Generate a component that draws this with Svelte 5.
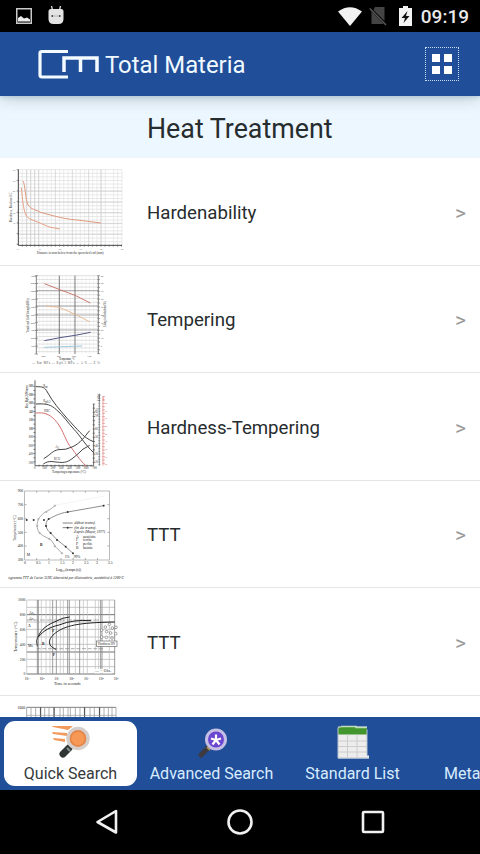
<script lang="ts">
	type Item = { label: string; chart: string };

	const items: Item[] = [
		{ label: 'Hardenability', chart: 'hardenability' },
		{ label: 'Tempering', chart: 'tempering' },
		{ label: 'Hardness-Tempering', chart: 'hardness' },
		{ label: 'TTT', chart: 'ttt-log' },
		{ label: 'TTT', chart: 'ttt-grid' },
		{ label: '', chart: 'partial' }
	];

	const tabs = [
		{ label: 'Quick Search', icon: 'quick' },
		{ label: 'Advanced Search', icon: 'advanced' },
		{ label: 'Standard List', icon: 'list' },
		{ label: 'Meta', icon: '' }
	];

	let active = $state(0);

	const range = (from: number, to: number, step: number) =>
		Array.from({ length: Math.floor((to - from) / step) + 1 }, (_, i) => from + i * step);

	const vLines = (xs: number[], top: number, bottom: number) =>
		xs.map((x) => `M${x} ${top}V${bottom}`).join('');
	const hLines = (ys: number[], left: number, right: number) =>
		ys.map((y) => `M${left} ${y}H${right}`).join('');
</script>

{#snippet hardenability()}
	<path d={hLines(range(30, 252, 10.8), 56, 366)} stroke="#ddd" stroke-width="2" />
	<path d={vLines([67, 80, 92, 104, 116, 129, 141, 154, 179, 191, 204, 228, 241, 254, 278, 291, 303, 316, 341, 353, 366], 30, 256)} stroke="#e2e2e2" stroke-width="2" />
	<path d={vLines([80, 92, 104, 116, 166, 217, 266, 303], 30, 256) + hLines([94, 127, 159, 191, 223], 56, 366)} stroke="#cacaca" stroke-width="2" />
	<path d="M55 30V257H366" stroke="#444" stroke-width="3" />
	<path d={vLines(range(67, 366, 12.4), 255, 261) + hLines(range(30, 256, 32), 50, 56)} stroke="#555" stroke-width="2" />
	<path d="M69 64C76 75 75 116 84 136C92 149 109 151 122 158C166 171 200 179 240 182L303 190" stroke="#e09a7c" stroke-width="3" />
	<path d="M64 84C68 116 68 145 79 169C88 181 109 184 122 191Q146 205 180 208" stroke="#e8a184" stroke-width="3" />
	<g font-size="8" fill="#777">
		{#each [60, 50, 40, 30, 20, 10] as n, i}
			<text x="38" y={34 + i * 32}>{n}</text>
		{/each}
		{#each [0, 10, 20, 30, 40, 50] as n, i}
			<text x={52 + i * 62} y="271">{n}</text>
		{/each}
	</g>
	<text x="110" y="283" font-size="10" textLength="201" fill="#333">Distance in mm below from the quenched end (mm)</text>
	<text transform="translate(37 188) rotate(-90)" font-size="10" textLength="90" fill="#444">Hardness, Rockwell C</text>
{/snippet}

{#snippet tempering()}
	<path d={vLines(range(118, 294, 11.6), 27, 260)} stroke="#f0f0f0" stroke-width="2" />
	<path d={hLines(range(27, 262, 11.4), 109, 295)} stroke="#d2d2d2" stroke-width="2" />
	<path d={hLines([72, 118, 145, 190], 109, 295)} stroke="#888" stroke-width="2" />
	<path d={vLines([109, 178, 225, 295], 27, 262)} stroke="#666" stroke-width="2.5" />
	<path d={hLines(range(27, 262, 23.5), 104, 114) + hLines(range(27, 262, 11.7), 292, 300)} stroke="#777" stroke-width="2" />
	<path d="M133 51L177 68L225 86L271 109" stroke="#cb7c70" stroke-width="3" />
	<path d="M136 118L178 122L226 143L270 166" stroke="#e9bd98" stroke-width="3" />
	<path d="M133 222L180 213L225 206L272 197" stroke="#555887" stroke-width="3" />
	<path d="M133 242L246 238" stroke="#9fc9df" stroke-width="3" />
	<g font-size="8" fill="#555">
		{#each range(0, 9, 1) as i}
			<text x="92" y={30 + i * 23.5}>{1000 - i * 100}</text>
			<text x="302" y={30 + i * 23.5}>{90 - i * 10}</text>
		{/each}
		{#each [400, 500, 600, 700] as n, i}
			<text x={124 + i * 46} y="271">{n}</text>
		{/each}
	</g>
	<text x="177" y="279" font-size="9" textLength="48" fill="#333">Temperature, °C</text>
	<text x="96" y="293" font-size="9" textLength="203" fill="#555">— Rm MPa  — Rp0.2 MPa  — A %  — Z %</text>
	<text transform="translate(88 198) rotate(-90)" font-size="9" textLength="103" fill="#444">Tensile and Yield Strength (MPa)</text>
	<text transform="translate(318 181) rotate(-90)" font-size="9" textLength="77" fill="#444">Elong. in Reduction (%)</text>
{/snippet}

{#snippet hardness()}
	<path d="M105 17V273H281V88" stroke="#444" stroke-width="2.5" />
	<path d={hLines(range(35, 270, 12.6), 100, 106) + vLines(range(117, 280, 12), 270, 276) + hLines(range(88, 272, 12.5), 278, 285)} stroke="#555" stroke-width="2" />
	<path d="M298 57V273" stroke="#555" stroke-width="2" />
	<path d={hLines(range(62, 272, 8), 295, 301)} stroke="#777" stroke-width="2" />
	<path d="M309 66V273" stroke="#df7d7d" stroke-width="2" />
	<path d={hLines(range(66, 272, 10), 306, 315)} stroke="#e38b8b" stroke-width="2" />
	<path d="M108 36C128 36 134 37 142 52C158 82 178 104 202 132C220 151 246 182 260 190Q271 198 281 201" stroke="#444" stroke-width="3" />
	<path d="M108 88C143 86 153 91 169 105C192 124 202 143 222 164C239 181 253 208 281 234" stroke="#444" stroke-width="3" />
	<path d="M107 115C132 113 146 117 163 134C188 160 192 187 208 212C223 228 236 255 259 274" stroke="#d56f6f" stroke-width="3" />
	<path d="M131 252C152 240 158 227 176 225Q199 226 216 217C242 206 253 186 269 168" stroke="#444" stroke-width="3" />
	<path d="M130 268C147 256 159 262 179 263C201 265 209 258 229 242Q249 220 269 212" stroke="#444" stroke-width="3" />
	<g font-size="9" fill="#333">
		{#each ['2000', '1800', '1600', '1400', '1200', '1000', '800', '600', '400', '200'] as n, i}
			<text x="86" y={38 + i * 25.5} textLength="14">{n}</text>
		{/each}
		{#each [0, 100, 200, 300, 400, 500, 600, 700] as n, i}
			<text x={102 + i * 25} y="284">{n}</text>
		{/each}
		<text x="130" y="37">R<tspan dy="2">m</tspan></text>
		<text x="130" y="83">R<tspan dy="2">p0.2</tspan></text>
		<text x="132" y="111">HRC</text>
		<text x="166" y="221">A<tspan dy="2">5</tspan></text>
		<text x="162" y="257">KCU</text>
		{#each range(0, 4, 1) as i}
			<text x="285" y={166 + i * 25}>{60 - i * 10}</text>
		{/each}
	</g>
	<g font-size="8" fill="#db7373">
		{#each range(0, 8, 1) as i}
			<text x="314" y={88 + i * 23}>{60 - i * 5}</text>
		{/each}
	</g>
	<text x="156" y="295" font-size="10" textLength="101" fill="#333">Tempering temperature (°C)</text>
	<text transform="translate(85 99) rotate(-90)" font-size="10" textLength="68" fill="#333">Rm , Rp0.2 (N/mm²)</text>
	<text transform="translate(293 128) rotate(-90)" font-size="9" fill="#333">A5 (%)</text>
	<text transform="translate(299 80) rotate(-90)" font-size="9" fill="#333">Z (%)</text>
	<text transform="translate(313 80) rotate(-90)" font-size="8" fill="#d66">HRC</text>
{/snippet}

{#snippet tttLog()}
	<rect x="74" y="28" width="254" height="207" stroke="#999" stroke-width="2" />
	<path d={hLines([69, 111, 152, 193], 74, 80) + hLines([69, 111, 152, 193], 322, 328) + vLines(range(110, 320, 36.5), 229, 235) + vLines(range(110, 320, 36.5), 28, 33)} stroke="#888" stroke-width="2" />
	<path d="M165 72C157 79 145 87 136 91C123 100 117 109 115 114C107 131 113 147 119 154C132 167 145 168 154 176Q167 199 186 215" stroke="#999" stroke-width="2.5" />
	<path d="M166 71L311 43" stroke="#e8e8e8" stroke-width="1.5" />
	<path d="M311 72L203 91C178 94 155 108 146 112C132 124 138 145 152 154C160 161 164 169 172 175L197 195L219 215" stroke="#777" stroke-width="2.5" />
	<g fill="#222">
		{#each [[311, 72], [203, 91], [146, 112], [138, 133], [152, 154], [171, 175], [197, 195], [219, 215], [132, 115], [101, 115], [80, 115]] as [x, y]}
			<rect x={x - 2.5} y={y - 2.5} width="5" height="5" />
		{/each}
	</g>
	<g fill="#fff" stroke="#777" stroke-width="1.5">
		{#each [[165, 72], [139, 91], [115, 112], [112, 133], [119, 154], [148, 172], [164, 194], [186, 215]] as [x, y]}
			<circle cx={x} cy={y} r="2" />
		{/each}
	</g>
	<path d="M188 124H218M188 138H218" stroke="#444" stroke-width="2" />
	<circle cx="203" cy="138" r="3" fill="#333" />
	<g font-size="11" fill="#222">
		<text x="223" y="128" textLength="64" lengthAdjust="spacingAndGlyphs" font-style="italic">début transf.</text>
		<text x="223" y="141" textLength="66" lengthAdjust="spacingAndGlyphs" font-style="italic">fin de transf.</text>
		<text x="221" y="155" textLength="94" font-style="italic">d'après (Mayer, 1977)</text>
		{#each [['A', 'austénite'], ['F', 'ferrite'], ['P', 'perlite'], ['B', 'bainite']] as [key, name], i}
			<text x="228" y={168 + i * 11}>{key}</text>
			<text x="249" y={168 + i * 11}>{name}</text>
		{/each}
		<text x="120" y="194" font-weight="bold">B</text>
		<text x="80" y="223">M</text>
		<text x="194" y="228">1%</text>
		<text x="221" y="228">99%</text>
		{#each [[900, 31], [700, 73], [600, 115], [500, 156], [400, 197], [300, 239]] as [n, y]}
			<text x="53" {y} textLength="16">{n}</text>
		{/each}
		{#each ['0', '0.5', '1', '1.5', '2', '2.5', '3', '3.5'] as n, i}
			<text x={72 + i * 36} y="248">{n}</text>
		{/each}
	</g>
	<text x="168" y="267" font-size="12" textLength="75" fill="#222">Log₁₀ (temps (s))</text>
	<text transform="translate(47 178) rotate(-90)" font-size="11" textLength="77" fill="#333">Température (°C)</text>
	<text x="25" y="292" font-size="11" font-style="italic" textLength="347" fill="#222">ogramme TTT de l'acier 35NC déterminé par dilatométrie, austénitisé à 1200°C</text>
{/snippet}

{#snippet tttGrid()}
	<path d={hLines([31, 53, 97, 119, 142, 164, 209, 231], 80, 345)} stroke="#aaa" stroke-width="2" />
	<path d={hLines([75, 187, 253], 80, 345)} stroke="#555" stroke-width="2.5" />
	<path d={vLines([80, 124, 138, 150, 181, 190, 226, 250, 262, 286, 296, 328], 31, 253)} stroke="#bbb" stroke-width="2" />
	<path d={vLines([112, 115, 158, 169, 203, 208, 239, 302, 306, 344], 31, 253)} stroke="#888" stroke-width="2.5" />
	<path d="M80 91H300" stroke="#888" stroke-width="2" stroke-dasharray="16 4" />
	<path d="M110 177H310" stroke="#888" stroke-width="2" stroke-dasharray="12 5" />
	<path d="M115 141C122 119 144 104 168 95Q188 83 209 82" stroke="#222" stroke-width="3" />
	<path d="M115 142C131 122 151 112 177 106Q219 89 273 93" stroke="#222" stroke-width="3" />
	<path d="M168 179C139 167 145 147 166 130C196 108 231 99 344 97" stroke="#222" stroke-width="3" />
	<path d="M115 139Q105 152 112 170" stroke="#333" stroke-width="2.5" />
	<rect x="289" y="154" width="62" height="16" fill="#fff" stroke="#666" stroke-width="2" />
	<rect x="285" y="238" width="51" height="13" fill="#fff" />
	<g fill="#fff" stroke="#777" stroke-width="2">
		{#each [[305, 121], [316, 112], [328, 104], [337, 115], [320, 126], [332, 130], [347, 132], [305, 142], [319, 143], [336, 145], [348, 113]] as [x, y]}
			<circle cx={x} cy={y} r="4" />
		{/each}
	</g>
	<g font-size="11" fill="#222">
		<text x="87" y="74">Ac₃</text>
		<text x="87" y="92">Ac₁</text>
		<text x="84" y="111" font-weight="bold">A</text>
		<text x="157" y="126" font-weight="bold">F</text>
		<text x="126" y="166" font-weight="bold">B</text>
		<text x="158" y="199" font-weight="bold">P</text>
		<text x="84" y="173">Ms</text>
		<text x="294" y="166" textLength="52" lengthAdjust="spacingAndGlyphs">Hardness HV</text>
		<text x="286" y="248" textLength="48">— = Obs.</text>
		{#each ['1000', '800', '600', '400', '200', '0'] as n, i}
			<text x="76" y={35 + i * 44.5} text-anchor="end">{n}</text>
		{/each}
		{#each range(0, 6, 1) as i}
			<text x={74 + i * 44.5} y="272">10<tspan dy="-4" font-size="8">{i - 1}</tspan></text>
		{/each}
	</g>
	<text x="162" y="286" font-size="12" textLength="80" fill="#222">Time in seconds</text>
	<text transform="translate(50 187) rotate(-90)" font-size="12" textLength="91" fill="#222">Temperature (°C)</text>
{/snippet}

{#snippet partial()}
	<path d="M80 32H348" stroke="#666" stroke-width="2.5" />
	<path d={vLines([80, 93, 107, 121, 134, 147, 163, 180, 190, 204, 211, 226, 240, 253, 270, 283, 298, 312, 325, 336, 348], 32, 75)} stroke="#888" stroke-width="2" />
	<path d={vLines([122, 162, 254, 299], 32, 75)} stroke="#444" stroke-width="3" />
	<path d="M80 56H348" stroke="#999" stroke-width="2" />
	<text x="52" y="36" font-size="12" fill="#222">1000</text>
{/snippet}

<div class="screen">
	<div class="status">
		<svg class="picture" width="16" height="16" viewBox="0 0 16 16" aria-hidden="true">
			<rect x=".75" y=".75" width="14.5" height="14.5" fill="none" stroke="#c9c9c9" stroke-width="1.5" />
			<path d="M2 13V10L5 8L8 10.5L11 9.5L14 11.5V13.5H2Z" fill="#ededed" />
		</svg>
		<svg class="robot" width="16" height="20" viewBox="0 0 16 20" aria-hidden="true">
			<path d="M4.5 5L3.5 1M11.5 5L12.5 1" stroke="#d9d9d9" stroke-width="1.3" />
			<path d="M.5 6Q.5 4 3 4H13Q15.500 4 15.500 6V14Q15.500 19 10.500 19H5.500Q.5 19 .5 14Z" fill="#e3e3e3" />
			<circle cx="4.300" cy="11" r="1" fill="#444" />
			<circle cx="11.700" cy="11" r="1" fill="#444" />
			<path d="M5.500 11H10.500" stroke="#aaa" stroke-width=".8" />
		</svg>
		<svg class="wifi" width="24" height="19" viewBox="0 0 24 19" aria-hidden="true">
			<path d="M0 4.500Q12 -4 24 4.500L12 19Z" fill="#f2f2f2" />
		</svg>
		<svg class="nosim" width="18" height="20" viewBox="0 0 18 20" aria-hidden="true">
			<path d="M6 1H15.500V15L4.500 4Z M2.500 5.500L14.500 18H2.500Z" fill="#444" />
			<path d="M.8 2.500L17 19" stroke="#555" stroke-width="1.6" />
		</svg>
		<svg class="battery" width="13" height="20" viewBox="0 0 13 20" aria-hidden="true">
			<path d="M0 2H4V0H9V2H13V20H0Z" fill="#f4f4f4" />
			<path d="M8.500 5L2.500 12H6L4.500 17L10.500 10H7Z" fill="#111" />
		</svg>
		<span class="clock">09:19</span>
	</div>

	<header>
		<svg class="logo" width="62" height="32" viewBox="0 0 62 32" fill="none" aria-label="Total Materia logo">
			<path d="M31 3.500H5Q3 3.500 3 5V27Q3 29 5 29H31" stroke="#f4fbff" stroke-width="3.200" />
			<path d="M27 24V10H60V24M43.500 10V24" stroke="#f4fbff" stroke-width="3.500" />
		</svg>
		<h1>Total Materia</h1>
		<button class="menu" aria-label="Menu">
			<span></span><span></span><span></span><span></span>
		</button>
	</header>

	<main>
		<h2>Heat Treatment</h2>
		<ul>
			{#each items as item}
				<li>
					<svg class="chart" viewBox="0 -5 405 322.5" fill="none" aria-hidden="true">
						{#if item.chart === 'hardenability'}
							{@render hardenability()}
						{:else if item.chart === 'tempering'}
							{@render tempering()}
						{:else if item.chart === 'hardness'}
							{@render hardness()}
						{:else if item.chart === 'ttt-log'}
							{@render tttLog()}
						{:else if item.chart === 'ttt-grid'}
							{@render tttGrid()}
						{:else}
							{@render partial()}
						{/if}
					</svg>
					{#if item.label}
						<span class="label">{item.label}</span>
						<span class="arrow">&gt;</span>
					{/if}
				</li>
			{/each}
		</ul>
	</main>

	<nav class="tabs">
		{#each tabs as tab, i}
			<button class="tab" class:active={active === i} class:last={i === tabs.length - 1} onclick={() => (active = i)}>
				<svg class="icon" width="40" height="36" viewBox="0 0 40 36" fill="none" aria-hidden="true">
					{#if tab.icon === 'quick'}
						<path d="M1 3H22L17 7L12 6L2 4ZM1 9L16 10V13L2 11ZM2 15L14 16V19L3 17Z" fill="#f29a5c" />
						<path d="M18 25L12 31" stroke="#303535" stroke-width="7" stroke-linecap="round" />
						<path d="M16 25L19 28" stroke="#8b9391" stroke-width="2" />
						<circle cx="27" cy="15.500" r="10" fill="#f79855" stroke="#d6ceca" stroke-width="3.500" />
						<circle cx="27" cy="15.500" r="7.500" stroke="#e28449" stroke-width="1.500" />
					{:else if tab.icon === 'advanced'}
						<path d="M17 24L9 32" stroke="#3d3a40" stroke-width="5" stroke-linecap="round" />
						<path d="M15 24L18 27" stroke="#a58d59" stroke-width="2" />
						<circle cx="24" cy="16.500" r="9.500" fill="#6b46cf" stroke="#c5bfe5" stroke-width="3" />
						<path d="M24 11.500V17L19 15.500M24 17L29 15.500M24 17L20.500 21.500M24 17L27.500 21.500" stroke="#fff" stroke-width="2.200" />
					{:else if tab.icon === 'list'}
						<g transform="translate(0 1.5)">
							<path d="M5 2H34V31H36V34H5Z" fill="#ededed" />
							<path d="M5 3H8V2H23V3H34V10H5Z" fill="#43962d" />
							<path d="M8 2H23V3H34" stroke="#c2dfba" stroke-width="1.500" />
							<path d="M5 16.500H34M5 22H34M5 27.500H34M14.500 10V33M24 10V33" stroke="#ccc" />
							<path d="M5 3V33.500H36M34 5V31" stroke="#b8c2ce" />
						</g>
					{/if}
				</svg>
				<span>{tab.label}</span>
			</button>
		{/each}
	</nav>

	<div class="system">
		<svg width="24" height="28" viewBox="0 0 24 28" fill="none" aria-label="Back">
			<path d="M21 3V24.500L2.500 14Z" stroke="#f1f1f1" stroke-width="2.600" stroke-linejoin="round" />
		</svg>
		<svg width="28" height="28" viewBox="0 0 28 28" fill="none" aria-label="Home">
			<circle cx="14" cy="14" r="11.500" stroke="#f1f1f1" stroke-width="2.600" />
		</svg>
		<svg width="24" height="28" viewBox="0 0 24 28" fill="none" aria-label="Recent apps">
			<rect x="2" y="4" width="20" height="20" rx="1" stroke="#f1f1f1" stroke-width="2.600" />
		</svg>
	</div>
</div>

<style>
	:global(body) {
		margin: 0;
		overflow: hidden;
	}

	.screen {
		display: flex;
		flex-direction: column;
		width: 480px;
		height: 854px;
		overflow: hidden;
		background: #fff;
		color: #272c2e;
		font-family: Roboto, sans-serif;
	}

	.status {
		display: flex;
		flex: none;
		align-items: center;
		box-sizing: border-box;
		height: 32px;
		padding: 0 11px 0 16px;
		background: #000;
	}

	.robot {
		margin: -2px 0 0 16px;
	}

	.wifi {
		margin-left: auto;
	}

	.nosim {
		margin-left: 7px;
	}

	.battery {
		margin-left: 12px;
	}

	.clock {
		margin: 1px 0 0 9px;
		color: #e9e9e9;
		font-size: 19px;
		font-weight: 500;
		line-height: 32px;
	}

	header {
		display: flex;
		position: relative;
		flex: none;
		align-items: center;
		box-sizing: border-box;
		height: 64px;
		padding: 0 21px 0 37px;
		background: #204e99;
		box-shadow: 0 1px 16px #8b9b9b99, 0 0 5px #4f8bd066;
		clip-path: inset(0 0 -24px 0);
	}

	.logo {
		margin-right: 6px;
	}

	h1 {
		margin: 2px 0 0;
		color: #f1faff;
		font-size: 23.9px;
		font-weight: 400;
	}

	.menu {
		display: grid;
		grid-template-columns: 8px 8px;
		grid-template-rows: 8px 8px;
		gap: 4px;
		place-content: center;
		box-sizing: border-box;
		width: 34px;
		height: 34px;
		margin-left: auto;
		padding: 0;
		border: 1px dotted #c7dff4;
		background: none;
	}

	.menu span {
		background: #fff;
	}

	main {
		flex: 1;
		min-height: 0;
		overflow: hidden;
	}

	h2 {
		box-sizing: border-box;
		height: 62px;
		margin: 0;
		padding: 3px 0 0 147px;
		background: #edf7ff;
		font-size: 26.8px;
		font-weight: 400;
		line-height: 60px;
	}

	ul {
		margin: 0;
		padding: 0;
		list-style: none;
	}

	li {
		display: flex;
		align-items: center;
		box-sizing: border-box;
		height: 107.5px;
		padding-right: 14px;
		border-bottom: 1px solid #e6e6e6;
	}

	.chart {
		flex: none;
		width: 135px;
		height: 107.5px;
		font-family: 'Liberation Serif', serif;
	}

	.label {
		flex: 1;
		margin: 3px 0 0 12px;
		font-size: 18.65px;
	}

	.arrow {
		margin-top: 3px;
		color: #999;
		font-size: 21px;
	}

	.tabs {
		display: flex;
		flex: none;
		box-sizing: border-box;
		height: 73px;
		padding: 4px;
		overflow: hidden;
		background: #204e99;
	}

	.tab {
		display: flex;
		flex: none;
		flex-direction: column;
		align-items: center;
		width: 133px;
		height: 65px;
		margin-right: 8px;
		padding: 2px 0 0;
		border: 0;
		border-radius: 11px;
		background: none;
		color: #d8ecff;
		font: 16px/21px Roboto, sans-serif;
		white-space: nowrap;
	}

	.tab span {
		margin-top: 4px;
	}

	.tab.last {
		align-items: flex-start;
		width: 53px;
		margin-right: 0;
		padding-left: 17px;
	}

	.tab.active {
		background: #fff;
		color: #36393b;
	}

	.system {
		display: flex;
		flex: none;
		align-items: center;
		justify-content: space-between;
		box-sizing: border-box;
		height: 64px;
		padding: 0 95px;
		background: #000;
	}
</style>
